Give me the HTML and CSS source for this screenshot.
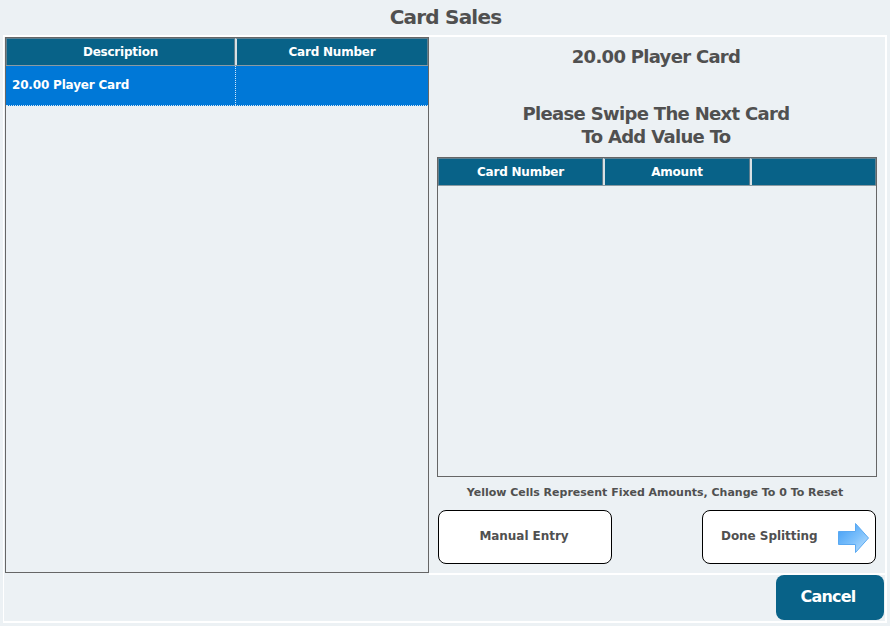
FILE: index.html
```html
<!DOCTYPE html>
<html lang="en">
<head>
<meta charset="utf-8">
<title>Card Sales</title>
<link rel="stylesheet" href="styles.css">
</head>
<body>
<h1 class="title">Card Sales</h1>
<main class="frame">
  <div class="top">
    <section class="grid grid-left">
      <div class="head head-left">
        <div class="hcell">Description</div>
        <div class="hcell">Card Number</div>
      </div>
      <div class="row-selected">
        <div class="cell">20.00 Player Card</div>
        <div class="cell"></div>
      </div>
    </section>
    <section class="side">
      <h2 class="item">20.00 Player Card</h2>
      <h2 class="prompt">Please Swipe The Next Card<br>To Add Value To</h2>
      <div class="grid grid-right">
        <div class="head head-right">
          <div class="hcell">Card Number</div>
          <div class="hcell">Amount</div>
          <div class="hcell"></div>
        </div>
      </div>
      <p class="note">Yellow Cells Represent Fixed Amounts, Change To 0 To Reset</p>
      <div class="actions">
        <button class="btn btn-manual">Manual Entry</button>
        <button class="btn btn-done"><span>Done Splitting</span>
          <svg class="arrow" width="34" height="32" viewBox="0 0 34 32">
            <defs>
              <linearGradient id="ag" x1="0" y1="0" x2="1" y2="1">
                <stop offset="0" stop-color="#3f9cf5"/>
                <stop offset="0.55" stop-color="#7cc0fb"/>
                <stop offset="1" stop-color="#c4e4fe"/>
              </linearGradient>
            </defs>
            <path d="M2.500 9.500H19.500V1.500L32.500 16L19.500 30.500V22.500H2.500Z" fill="url(#ag)" stroke="#5aa9f2"/>
          </svg>
        </button>
      </div>
    </section>
  </div>
  <footer class="foot">
    <button class="cancel">Cancel</button>
  </footer>
</main>
</body>
</html>
```
FILE: styles.css
```css
* { box-sizing: border-box; }
html, body { margin: 0; height: 100%; }
body {
  width: 890px;
  height: 626px;
  overflow: hidden;
  background: #ecf1f4;
  font-family: "DejaVu Sans", Verdana, sans-serif;
  font-weight: bold;
  color: #505050;
}
.title {
  margin: 0;
  height: 35px;
  padding-left: 1px;
  line-height: 35px;
  font-size: 20px;
  letter-spacing: -0.8px;
  text-align: center;
}
.frame {
  margin: 0 3px;
  height: 588px;
  border: 2px solid #fff;
  border-left-width: 1px;
  display: flex;
  flex-direction: column;
}
.top {
  height: 538px;
  flex: none;
  display: flex;
}
.grid {
  border: 1px solid #666;
  background: #ecf1f4;
}
.grid-left {
  width: 424px;
  height: 536px;
  margin-left: 1px;
  flex: none;
}
.head {
  display: grid;
  height: 28px;
  background: #086288;
  border-bottom: 1px solid #8a9ba3;
  color: #fff;
  font-size: 12px;
  letter-spacing: -0.22px;
  line-height: 26px;
  text-align: center;
}
.head-left { grid-template-columns: 229px 193px; }
.head-right { grid-template-columns: 165px 147px 126px; }
.hcell { border: 1px solid #5f7f8f; border-bottom: 0; }
.hcell + .hcell { border-left: 2px solid #d8e0e4; }
.row-selected {
  display: grid;
  grid-template-columns: 229px 193px;
  height: 40px;
  background: #0078d7;
  color: #fff;
  font-size: 12px;
  letter-spacing: -0.18px;
  line-height: 38px;
  border-bottom: 1px dotted #cfe6fa;
}
.cell { padding-left: 6px; }
.cell + .cell { border-left: 1px dotted #cfe6fa; }
.side {
  flex: 1;
  display: flex;
  flex-direction: column;
  align-items: center;
  border-bottom: 2px solid #fff;
  padding: 0 8px;
}
.item {
  margin: 8px 2px 0 0;
  height: 24px;
  line-height: 24px;
  font-size: 18px;
  letter-spacing: -0.7px;
}
.prompt {
  margin: 33px 2px 0 0;
  font-size: 18px;
  letter-spacing: -0.68px;
  line-height: 23px;
  text-align: center;
}
.grid-right {
  width: 440px;
  height: 320px;
  margin-top: 9px;
  flex: none;
}
.note {
  margin: 8px 4px 0 0;
  line-height: 16px;
  font-size: 11px;
  letter-spacing: -0.01px;
}
.actions {
  width: 438px;
  margin-top: 9px;
  display: flex;
  justify-content: space-between;
}
.btn {
  width: 174px;
  height: 54px;
  border: 1px solid #000;
  border-radius: 8px;
  background: #fff;
  color: #505050;
  font: inherit;
  font-size: 12px;
  letter-spacing: -0.05px;
  display: flex;
  align-items: center;
  justify-content: center;
  padding: 0 0 2px;
}
.btn-manual { padding-right: 2px; }
.btn-done {
  justify-content: flex-start;
  padding-left: 18px;
  position: relative;
}
.arrow { position: absolute; right: 5px; top: 11px; }
.foot {
  flex: 1;
  display: flex;
  justify-content: flex-end;
  align-items: flex-start;
}
.cancel {
  width: 108px;
  height: 45px;
  margin-right: 1px;
  border: 0;
  border-radius: 8px;
  background: #086288;
  color: #fff;
  font: inherit;
  font-size: 16px;
  letter-spacing: -0.8px;
  padding: 0 4px 3px 0;
}
```
